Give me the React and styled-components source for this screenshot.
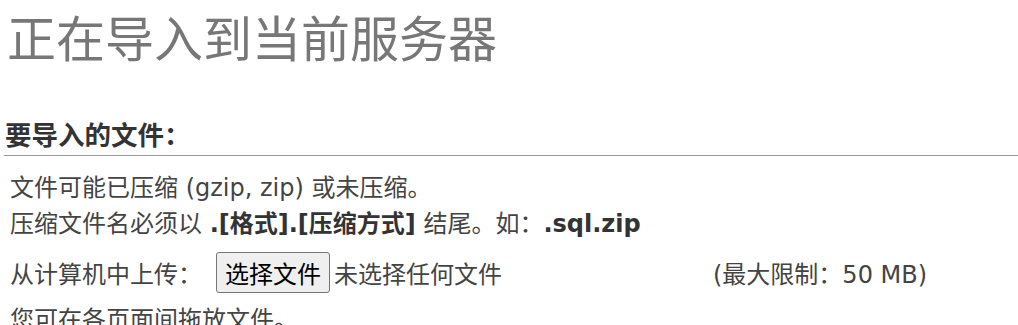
import React from 'react'
import styled, { createGlobalStyle } from 'styled-components'

const GlobalStyle = createGlobalStyle`
body {
  margin: 0;
  background: #fff;
  font-family: "DejaVu Sans", "Noto Sans CJK SC", sans-serif;
  color: #444;
}
`

const App = () => {
    return (
        <Page>
            <GlobalStyle />
            <Title>正在导入到当前服务器</Title>
            <Section>
                <Legend>要导入的文件：</Legend>
                <Body>
                    <Line>文件可能已压缩 (gzip, zip) 或未压缩。</Line>
                    <Line>压缩文件名必须以 <b>.[格式].[压缩方式]</b> 结尾。如：<b>.sql.zip</b></Line>
                    <UploadRow>
                        <Label>从计算机中上传：</Label>
                        <FileButton type="button">选择文件</FileButton>
                        <FileName>未选择任何文件</FileName>
                        <Limit>(最大限制：50 MB)</Limit>
                    </UploadRow>
                    <Hint>您可在各页面间拖放文件。</Hint>
                </Body>
            </Section>
        </Page>
    )
}

export default App

const Page = styled.div`
width: 1018px;
height: 325px;
overflow: hidden;
padding: 0 0 0 4px;
box-sizing: border-box;
`

const Title = styled.h2`
margin: 11px 0 0 3px;
font-size: 49px;
line-height: 59px;
font-weight: normal;
color: #777;
`

const Section = styled.div`
margin-top: 50px;
`

const Legend = styled.h3`
margin: 0;
padding: 0 0 4px 1px;
font-size: 26.5px;
line-height: 31px;
font-weight: bold;
color: #333;
border-bottom: 1px solid #999;
`

const Body = styled.div`
padding: 14px 0 0 6px;
font-size: 24px;
`

const Line = styled.div`
line-height: 36px;
b {
  color: #333;
}
`

const UploadRow = styled.div`
display: flex;
align-items: center;
margin-top: 10px;
height: 41px;
`

const Label = styled.span`
width: 206px;
flex-shrink: 0;
`

const FileButton = styled.button`
height: 41px;
padding: 0 8px;
font-family: "Noto Sans CJK SC", sans-serif;
font-size: 24px;
color: #000;
background: #efefef;
border: 1px solid #767676;
border-radius: 3px;
`

const FileName = styled.span`
margin-left: 4px;
width: 379px;
`

const Limit = styled.span``

const Hint = styled.div`
margin-top: 9px;
line-height: 36px;
`
